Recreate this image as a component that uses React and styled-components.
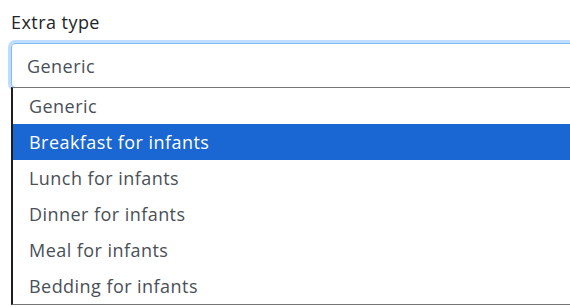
import styled, { createGlobalStyle } from 'styled-components';

const Global = createGlobalStyle`
    html, body { margin: 0; padding: 0; background: #fff; }
    body { font-family: "Open Sans", "Noto Sans", sans-serif; letter-spacing: 0.45px; }
`

const Field = styled.div`
    width: 100vw;
    overflow: hidden;
    padding: 10px 0 0 11px;
    box-sizing: border-box;
`

const Label = styled.label`
    display: block;
    font-size: 18px;
    color: #212529;
    line-height: 24px;
    margin-bottom: 9px;
`

const Select = styled.div`
    box-sizing: border-box;
    height: 45px;
    margin-right: -12px;
    border: 1px solid #80bdff;
    border-radius: 4px;
    box-shadow: 0 0 0 3px rgba(0, 123, 255, 0.25);
    padding: 0 15px;
    display: flex;
    align-items: center;
    font-size: 18px;
    color: #495057;
`

const Menu = styled.ul`
    margin: -1px -12px 0 0;
    padding: 0;
    list-style: none;
    background: #fff;
    border-top: 1px solid #767676;
    border-left: 2px solid #1e1e1e;
    border-bottom: 1px solid #767676;
`

const Option = styled.li`
    height: 36px;
    display: flex;
    align-items: center;
    padding-left: 16px;
    font-size: 18px;
    color: ${p => p.$active ? '#fff' : '#495057'};
    background: ${p => p.$active ? '#1a66d2' : '#fff'};
`

const options = [
    "Generic",
    "Breakfast for infants",
    "Lunch for infants",
    "Dinner for infants",
    "Meal for infants",
    "Bedding for infants"
];

export default function App(){
    return (
    <>
        <Global />
        <Field>
            <Label>Extra type</Label>
            <Select>Generic</Select>
            <Menu>
                {options.map((o, i) => (
                    <Option key={o} $active={i === 1}>{o}</Option>
                ))}
            </Menu>
        </Field>
    </>
    );
}
